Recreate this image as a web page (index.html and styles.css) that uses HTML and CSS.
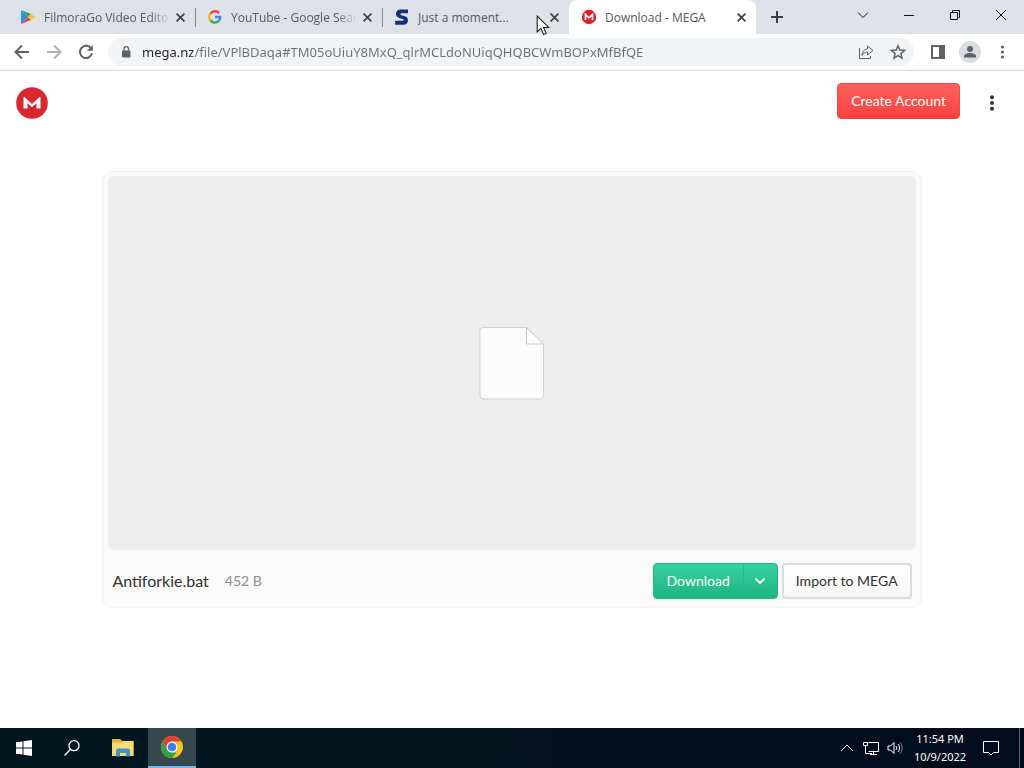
FILE: index.html
```html
<!DOCTYPE html>
<html lang="en">
<head>
<meta charset="utf-8">
<title>Download - MEGA</title>
<link rel="stylesheet" href="styles.css">
</head>
<body>
<div class="screen">
  <header class="browser">
    <div class="tabstrip">
      <div class="tab">
        <svg class="favicon" viewBox="0 0 16 16" aria-hidden="true"><path d="M1 1v14l7-7z" fill="#2f8fe0"/><path d="M1 1l7 7 3-3z" fill="#32a262"/><path d="M1 15l7-7 3 3z" fill="#e8453c"/><path d="M11 5l4.500 3-4.500 3-3-3z" fill="#f7c331"/></svg>
        <a class="tab-title faded" href="#">FilmoraGo Video Editor</a>
        <button class="tab-close" aria-label="Close tab"><svg viewBox="0 0 8 8"><path d="M.5.5l7 7M7.500.5l-7 7"/></svg></button>
      </div>
      <div class="tab">
        <svg class="favicon" viewBox="0 0 16 16" fill="none" stroke-width="2.400" aria-hidden="true"><path d="M3.400 4.800A5.400 5.400 0 0 1 12 4.100" stroke="#ea4335"/><path d="M3.400 4.800a5.400 5.400 0 0 0 0 6.400" stroke="#fbbc05"/><path d="M3.400 11.200A5.400 5.400 0 0 0 11.500 12.200" stroke="#34a853"/><path d="M11.500 12.200A5.400 5.400 0 0 0 13.300 8H8" stroke="#4285f4"/></svg>
        <a class="tab-title faded" href="#">YouTube - Google Search</a>
        <button class="tab-close" aria-label="Close tab"><svg viewBox="0 0 8 8"><path d="M.5.5l7 7M7.500.5l-7 7"/></svg></button>
      </div>
      <div class="tab">
        <svg class="favicon" viewBox="0 0 16 16" aria-hidden="true"><path d="M14 .5V4.300H7.500c-1.300 0-1.500 1.500-.2 1.900l3.700 1c4.700 1.500 3.800 8.500-1.800 8.500H1.200v-3.900h7.300c1.500 0 1.700-1.500.3-1.900l-3.600-1C.3 7.400 1.300.5 6.500.5z" fill="#12307a"/></svg>
        <a class="tab-title" href="#">Just a moment...</a>
        <button class="tab-close" aria-label="Close tab"><svg viewBox="0 0 8 8"><path d="M.5.5l7 7M7.500.5l-7 7"/></svg></button>
        <svg class="pointer" viewBox="0 0 13 20" aria-hidden="true"><path d="M1 1v15l3.500-3.300L7 18.500l2.500-1-2.400-5.600H12z" fill="#fff" stroke="#111"/></svg>
      </div>
      <div class="tab active">
        <svg class="favicon" viewBox="0 0 16 16" aria-hidden="true"><circle cx="8" cy="8" r="7.200" fill="#dc1f2c"/><path d="M4.500 11V5.500L8 8.800l3.500-3.300V11" fill="none" stroke="#fff" stroke-width="1.700"/></svg>
        <a class="tab-title" href="#">Download - MEGA</a>
        <button class="tab-close" aria-label="Close tab"><svg viewBox="0 0 8 8"><path d="M.5.5l7 7M7.500.5l-7 7"/></svg></button>
      </div>
      <button class="new-tab" aria-label="New tab"><svg viewBox="0 0 12 12"><path d="M6 0v12M0 6h12"/></svg></button>
      <div class="window-controls">
        <button aria-label="Search tabs"><svg viewBox="0 0 12 12"><path d="M1 3.500l5 5 5-5"/></svg></button>
        <button aria-label="Minimize"><svg viewBox="0 0 12 12"><path d="M1 6.500h10"/></svg></button>
        <button aria-label="Restore"><svg viewBox="0 0 12 12"><path d="M1.500 3.500h7v7h-7zM3.500 3.500v-2h7v7h-2"/></svg></button>
        <button aria-label="Close window"><svg viewBox="0 0 12 12"><path d="M1 1l10 10M11 1L1 11"/></svg></button>
      </div>
    </div>
    <div class="toolbar">
      <button class="tool" aria-label="Back"><svg viewBox="0 0 16 16"><path d="M15 8H2M8 1.500L1.500 8 8 14.500"/></svg></button>
      <button class="tool disabled" aria-label="Forward"><svg viewBox="0 0 16 16"><path d="M1 8h13M8 1.500L14.500 8 8 14.500"/></svg></button>
      <button class="tool" aria-label="Reload"><svg viewBox="0 0 16 16"><path d="M13.300 4.800A6.100 6.100 0 1 0 14 9.300"/><path d="M14.800 1v5.800H9z" fill="#5f6368" stroke="none"/></svg></button>
      <div class="omnibox">
        <svg class="lock" viewBox="0 0 10 14" aria-hidden="true"><rect x="1" y="5.500" width="8.500" height="7" rx="1" fill="#5f6368"/><path d="M3 6V3.800a2.200 2.200 0 0 1 4.500 0V6" fill="none" stroke="#5f6368" stroke-width="1.300"/></svg>
        <input class="url" type="text" aria-label="Address" spellcheck="false" value="mega.nz/file/VPlBDaqa#TM05oUiuY8MxQ_qlrMCLdoNUiqQHQBCWmBOPxMfBfQE">
        <button class="tool" aria-label="Share"><svg class="thin" viewBox="0 0 16 16"><path d="M1.500 4v10.500h11V12M9.500 5V2l5.500 4.500-5.500 4.500V8C7 8 5 9 4 11.500 4 8 6 5 9.500 5z"/></svg></button>
        <button class="tool" aria-label="Bookmark"><svg class="thin bold" viewBox="0 0 16 16"><path d="M8 1.800l1.800 4.300 4.700.4-3.600 3.100 1.100 4.600-4-2.500-4 2.500 1.100-4.600-3.600-3.100 4.700-.4z"/></svg></button>
      </div>
      <button class="tool" aria-label="Side panel"><svg viewBox="0 0 16 16"><path d="M2 2h12v12H2z"/><path d="M10 2h4v12h-4z" fill="#5f6368"/></svg></button>
      <button class="tool" aria-label="Profile"><svg class="avatar" viewBox="0 0 22 22"><circle cx="11" cy="11" r="11" fill="#d9dde2" stroke="none"/><circle cx="11" cy="8" r="3" fill="#5f6368" stroke="none"/><path d="M5 16.500v-1.200c0-2 3-3.300 6-3.300s6 1.300 6 3.300v1.200z" fill="#5f6368" stroke="none"/></svg></button>
      <button class="tool" aria-label="Browser menu"><svg viewBox="0 0 16 16"><g fill="#5f6368" stroke="none"><circle cx="8.500" cy="3" r="1.600"/><circle cx="8.500" cy="8" r="1.600"/><circle cx="8.500" cy="13" r="1.600"/></g></svg></button>
    </div>
  </header>

  <div class="page">
    <header class="site-header">
      <a class="logo" href="#" aria-label="MEGA"><svg viewBox="0 0 32 32"><circle cx="16" cy="16" r="15.800" fill="#d9272e"/><path d="M7.500 21.500V10.700c0-.8.700-1 1.200-.5l7.300 6.700 7.300-6.700c.5-.5 1.200-.3 1.200.5v10.800h-4v-5.300l-4 3.600a.8.8 0 0 1-1 0l-4-3.600v5.300z" fill="#fff"/></svg></a>
      <button class="create">Create Account</button>
      <button class="site-menu" aria-label="Menu"><svg viewBox="0 0 6 16"><circle cx="3" cy="2.200" r="2"/><circle cx="3" cy="8" r="2"/><circle cx="3" cy="13.800" r="2"/></svg></button>
    </header>
    <main class="card">
      <div class="preview">
        <svg class="file" viewBox="0 0 66 74" aria-hidden="true"><path d="M4 1.500h43.500l17 17V70a3 3 0 0 1-3 3H4a3 3 0 0 1-3-3V4.500a3 3 0 0 1 3-3z" fill="#fcfcfc" stroke="#d0d0d0"/><path d="M47.500 1.500v16.500h17z" fill="#fff" stroke="#c6c6c6"/></svg>
      </div>
      <div class="file-bar">
        <h1 class="name">Antiforkie.bat</h1>
        <span class="size">452 B</span>
        <div class="download">
          <button class="download-main">Download</button>
          <button class="download-more" aria-label="Download options"><svg viewBox="0 0 12 8"><path d="M1.500 1.500L6 6l4.500-4.500"/></svg></button>
        </div>
        <button class="import">Import to MEGA</button>
      </div>
    </main>
  </div>

  <footer class="taskbar">
    <button class="app" aria-label="Start"><svg class="i16" viewBox="0 0 16 16"><path d="M0 2.300l6.500-.9v6.100H0zM7.500 1.200L16 0v7.500H7.500zM0 8.500h6.500v6.100L0 13.700zM7.500 8.500H16V16l-8.500-1.200z" fill="#fff"/></svg></button>
    <button class="app" aria-label="Search"><svg class="i16" viewBox="0 0 16 16" fill="none" stroke="#fff" stroke-width="1.300"><circle cx="10" cy="5.700" r="5"/><path d="M6.500 9.300L.5 15.500"/></svg></button>
    <button class="app explorer" aria-label="File Explorer"><svg class="i22" viewBox="0 0 22 20"><path d="M0 1h8l2 2h11.500v15H0z" fill="#e9b33b"/><path d="M0 4.500h9l2-1.500h10.500v15H0z" fill="#fbd975"/><path d="M4 18.500v-6.500l1.500-1.500h11l1.500 1.500v6.500h-4V15H8v3.500z" fill="#3f94c8"/></svg></button>
    <button class="app current" aria-label="Google Chrome"><svg class="i22" viewBox="0 0 22 22"><circle cx="11" cy="11" r="11" fill="#fbc51d"/><path d="M1.500 5.500a11 11 0 0 1 19 0H11L6.200 13.700z" fill="#dd4234"/><path d="M1.500 5.500L6.200 13.800 11 16.500h4.800L11 22A11 11 0 0 1 1.500 5.500z" fill="#2da04e"/><circle cx="11" cy="11" r="5.500" fill="#fff"/><circle cx="11" cy="11" r="4.300" fill="#3f7ee8"/></svg></button>
    <div class="tray">
      <button class="tray-button" aria-label="Show hidden icons"><svg class="tray-icon" viewBox="0 0 16 16"><path d="M2 11l6-6 6 6"/></svg></button>
      <button class="tray-button" aria-label="Network"><svg class="tray-icon" viewBox="0 0 16 16"><path d="M5.500 2.500h10v9h-10M2.500 6v7.500H9M7 14.500h7M10.500 11.500v3M.5 2.500h4v3h-4z"/></svg></button>
      <button class="tray-button" aria-label="Volume"><svg class="tray-icon" viewBox="0 0 16 16"><path d="M1 6h2.500L7 2.500v11L3.500 10H1zM9 6a3 3 0 0 1 0 4M11 4a6 6 0 0 1 0 8"/><path d="M13 2.500a8 8 0 0 1 0 11" opacity=".5"/></svg></button>
      <button class="clock"><span>11:54 PM</span><span>10/9/2022</span></button>
      <button class="notifications" aria-label="Notifications"><svg class="i18" viewBox="0 0 18 18"><path d="M1.500 2.500h15v11h-5L9 16l-2.500-2.500h-5z"/></svg></button>
    </div>
  </footer>
</div>
</body>
</html>
```

FILE: styles.css
```css
* { box-sizing: border-box; }
body { margin: 0; font-family: "Open Sans", "Noto Sans", sans-serif; }
button { margin: 0; padding: 0; border: 0; background: none; color: inherit; font: inherit; }
button, a { display: flex; align-items: center; justify-content: center; }
a { color: inherit; text-decoration: none; }
svg { flex: none; }

.screen { display: flex; flex-direction: column; min-height: 100vh; background: #fff; }

.tabstrip { display: flex; height: 34px; padding-left: 8px; background: #dee1e6; }
.tab { position: relative; display: flex; align-items: center; flex: 0 1 187px; min-width: 0; padding: 0 7px 0 12px; font-size: 12px; color: #55585d; }
.tab::after { content: ""; position: absolute; right: -1px; top: 8px; width: 1px; height: 19px; background: #85888d; }
.tab:nth-child(3)::after, .tab.active::after { display: none; }
.tab.active { background: #fff; border-radius: 8px 8px 0 0; }
.favicon { width: 16px; height: 16px; }
.tab-title { flex: 1; min-width: 0; margin-left: 8px; overflow: hidden; white-space: nowrap; justify-content: flex-start; }
.faded { -webkit-mask-image: linear-gradient(90deg, #000 84%, transparent); mask-image: linear-gradient(90deg, #000 84%, transparent); }
.tab-close { width: 16px; height: 16px; margin-left: 2px; }
.tab-close svg { width: 9px; height: 9px; fill: none; stroke: #3c4043; stroke-width: 1.5; }
.pointer { position: absolute; left: 154px; top: 15px; width: 14px; height: 21px; z-index: 2; }
.new-tab { width: 28px; margin-left: 7px; }
.new-tab svg { width: 12px; height: 12px; stroke: #3c4043; stroke-width: 2; }
.window-controls { display: flex; margin-left: auto; }
.window-controls button { width: 46px; height: 29px; }
.window-controls svg { width: 12px; height: 12px; fill: none; stroke: #111; }

.toolbar { display: flex; align-items: center; gap: 4px; height: 37px; padding: 0 8px; border-bottom: 1px solid #d8d9dc; }
.tool { flex: none; width: 28px; height: 28px; }
.tool svg { width: 16px; height: 16px; fill: none; stroke: #5f6368; stroke-width: 2; }
.tool .thin { stroke-width: 1; }
.tool .bold { stroke-width: 1.5; }
.tool .avatar { width: 22px; height: 22px; }
.disabled { opacity: .5; }
.omnibox { display: flex; align-items: center; gap: 4px; flex: 1; min-width: 0; height: 28px; margin: 0 6px 0 4px; padding: 0 2px 0 13px; border-radius: 14px; background: #f1f3f4; }
.lock { width: 10px; height: 14px; }
.url { flex: 1; min-width: 0; margin-left: 7px; padding: 0; border: 0; outline: 0; font: 13px "Noto Sans", sans-serif; color: transparent; background: linear-gradient(90deg, #202124 51px, #6b6f74 51px); -webkit-background-clip: text; background-clip: text; }

.page { display: flex; flex-direction: column; flex: 1; font-family: Lato, sans-serif; font-size: 14px; }
.site-header { display: flex; align-items: center; height: 64px; padding: 0 16px; }
.logo svg { width: 32px; height: 32px; }
.create { height: 36px; margin: 0 16px 4px auto; padding: 0 13px 2px; border: 1px solid #ee4a47; border-radius: 4px; background: linear-gradient(#ff635c, #ff3f40); color: #fff; }
.site-menu { width: 32px; height: 32px; }
.site-menu svg { width: 6px; height: 16px; fill: #303233; }
.card { display: flex; flex-direction: column; flex: 1; margin: 36px 10% 120px; padding: 4px 5px 5px; border: 1px solid #f2f2f2; border-radius: 10px; background: #fafafa; }
.preview { display: flex; align-items: center; justify-content: center; flex: 1; border-radius: 6px; background: #ededed; }
.file { width: 66px; height: 74px; }
.file-bar { display: flex; align-items: center; padding: 13px 4px 3px; }
.name { margin: 0; padding-bottom: 2px; font-size: 16px; font-weight: 400; color: #303233; }
.size { margin-left: 16px; padding-bottom: 2px; color: #8c8e8f; }
.download { display: flex; height: 36px; margin-left: auto; border-radius: 4px; border: 1px solid #25b585; background: linear-gradient(#35d0a2, #20b580); color: #fff; }
.download-main { padding: 0 13px 2px; }
.download-more { width: 34px; border-left: 1px solid #25b88a; }
.download-more svg { width: 12px; height: 8px; fill: none; stroke: #fff; stroke-width: 2; }
.import { height: 36px; margin-left: 4px; padding: 0 12px 2px; border: 2px solid #dcdcdc; border-radius: 4px; background: linear-gradient(#fff, #f7f7f7); color: #303233; }

.taskbar { display: flex; height: 40px; background: linear-gradient(90deg, #021820, #020c1c); color: #fff; }
.app { width: 48px; }
.explorer { padding-left: 5px; }
.current { margin-left: 4px; background: #36474e; border-bottom: 2px solid #76b9ed; }
.i16 { width: 16px; height: 16px; }
.i22 { width: 22px; height: 22px; }
.i18 { width: 18px; height: 18px; fill: none; stroke: #fff; }
.tray { display: flex; align-items: center; margin-left: auto; border-right: 1px solid #5b6472; margin-right: 4px; }
.tray-button { width: 24px; height: 40px; }
.tray-icon { width: 16px; height: 16px; fill: none; stroke: #fff; }
.clock { flex-direction: column; width: 66px; font-family: "Noto Sans", sans-serif; font-size: 11px; line-height: 18px; }
.notifications { width: 46px; height: 40px; padding-right: 10px; }
```
